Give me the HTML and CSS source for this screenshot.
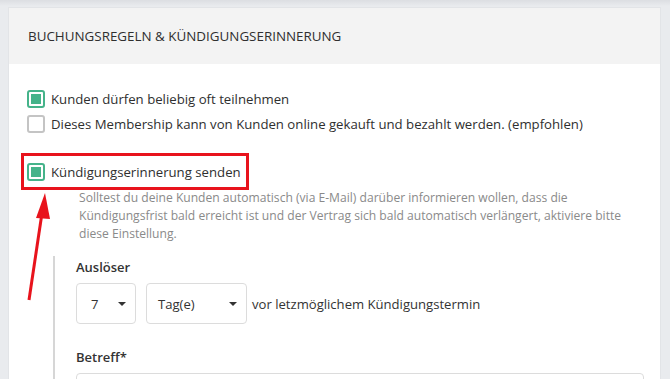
FILE: index.html
```html
<!DOCTYPE html>
<html lang="de">
<head>
    <meta charset="UTF-8">
    <meta name="viewport" content="width=device-width, initial-scale=1.0">
    <title>Buchungsregeln</title>
    <link rel="stylesheet" href="styles.css">
</head>
<body>
    <div class="panel">
        <div class="panel-heading">
            <h3>Buchungsregeln &amp; Kündigungserinnerung</h3>
        </div><!-- panel-heading -->
        <div class="panel-body">
            <label class="check-row">
                <span class="check checked"></span>
                <span>Kunden dürfen beliebig oft teilnehmen</span>
            </label>
            <label class="check-row">
                <span class="check"></span>
                <span>Dieses Membership kann von Kunden online gekauft und bezahlt werden. (empfohlen)</span>
            </label>
            <label class="check-row reminder">
                <span class="check checked"></span>
                <span class="highlight">Kündigungserinnerung senden</span>
            </label>
            <p class="help">Solltest du deine Kunden automatisch (via E-Mail) darüber informieren wollen, dass die<br>Kündigungsfrist bald erreicht ist und der Vertrag sich bald automatisch verlängert, aktiviere bitte diese Einstellung.</p>

            <div class="sub-settings">
                <div class="field-label">Auslöser</div>
                <div class="trigger">
                    <div class="select small">
                        <span>7</span>
                        <span class="caret"></span>
                    </div>
                    <div class="select">
                        <span>Tag(e)</span>
                        <span class="caret"></span>
                    </div>
                    <span class="trigger-text">vor letzmöglichem Kündigungstermin</span>
                </div>
                <div class="field-label subject">Betreff*</div>
                <div class="text-input"></div>
            </div>
        </div>

        <!-- annotation arrow -->
        <svg class="arrow" width="40" height="120" viewBox="0 0 40 120">
            <line x1="12" y1="112" x2="25" y2="25" stroke="#e8131c" stroke-width="3"/>
            <polygon points="28,5 19,30 33,31" fill="#e8131c"/>
        </svg>
    </div>
</body>
</html>
```

FILE: styles.css
```css
body {
    margin: 0;
    padding: 7px 9px 0 8px;
    font-family: "Open Sans", Arial, sans-serif;
    color: #333;
    background: linear-gradient(#dcdee2, #e9ebee 6px);
    height: 379px;
    overflow: hidden;
    box-sizing: border-box;
}

.panel {
    position: relative;
    background: #fff;
    border: 1px solid #e2e4e7;
    border-bottom: 0;
    height: 372px;
    box-sizing: border-box;
    overflow: hidden;
}

.panel-heading {
    height: 56px;
    display: flex;
    align-items: center;
    padding: 0 19px;
    background-color: #f3f3f3;
}
.panel-heading h3 {
    margin: 0;
    font-size: 13.4px;
    font-weight: 400;
    text-transform: uppercase;
    color: #2f2f2f;
}

.panel-body {
    padding: 22px 18px 0 18px;
}

/* checkboxes */
.check-row {
    display: flex;
    align-items: center;
    gap: 6px;
    height: 25px;
    font-size: 13.2px;
    color: #2f2f2f;
}
.check {
    width: 18px;
    height: 18px;
    box-sizing: border-box;
    border: 2px solid #c4c4c4;
    border-radius: 3px;
    flex-shrink: 0;
    position: relative;
}
.check.checked {
    border-color: #45b38a;
}
.check.checked::after {
    content: "";
    position: absolute;
    left: 2px;
    top: 2px;
    width: 10px;
    height: 10px;
    background: #45b38a;
}
.reminder {
    margin-top: 23px;
    width: max-content;
    outline: 3px solid #e8131c;
    outline-offset: 3px;
    padding-right: 2px;
}

.help {
    margin: 5px 0 0 52px;
    font-size: 12.1px;
    line-height: 18px;
    color: #8a8a8a;
    max-width: 560px;
}

/* unterbereich */
.sub-settings {
    margin: 13px 0 0 26px;
    padding: 1px 0 0 21px;
    border-left: 2px solid #d6d6d6;
}
.field-label {
    font-size: 13px;
    font-weight: 600;
    line-height: 20px;
}
.field-label.subject {
    margin-top: 23px;
}

.trigger {
    display: flex;
    align-items: center;
    gap: 10px;
    margin-top: 6px;
    font-size: 13.1px;
}
.select {
    width: 101px;
    height: 41px;
    box-sizing: border-box;
    border: 1px solid #dcdcdc;
    border-radius: 4px;
    display: flex;
    align-items: center;
    justify-content: space-between;
    padding: 0 9px 0 11px;
}
.select.small {
    width: 60px;
    padding-left: 14px;
}
.caret {
    width: 0;
    height: 0;
    border-left: 4px solid transparent;
    border-right: 4px solid transparent;
    border-top: 4px solid #333;
}
.trigger-text {
    margin-left: -5px;
}

.text-input {
    margin-top: 6px;
    width: 566px;
    height: 40px;
    border: 1px solid #dcdcdc;
    border-radius: 4px;
}

.arrow {
    position: absolute;
    left: 8px;
    top: 180px;
}
```
